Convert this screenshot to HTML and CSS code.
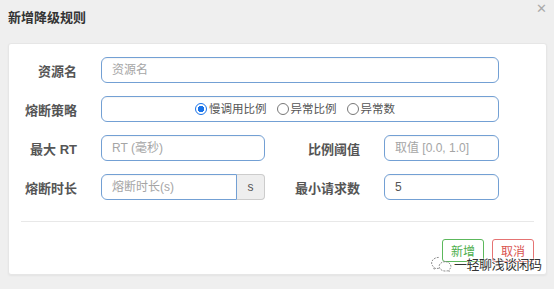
FILE: index.html
```html
<!DOCTYPE html>
<html lang="zh-CN">
<head>
    <meta charset="UTF-8">
    <title>新增降级规则</title>
    <link rel="stylesheet" href="styles.css">
</head>
<body>
    <div class="modal">
        <div class="modal-header">
            <h1>新增降级规则</h1>
            <span class="close">&#x2715;</span>
        </div>

        <div class="modal-body">
            <div class="form-grid">
                <label class="form-label">资源名</label>
                <div class="form-input span-3 placeholder">资源名</div>

                <label class="form-label">熔断策略</label>
                <div class="form-input span-3 radio-group">
                    <span class="radio checked"></span>慢调用比例
                    <span class="radio"></span>异常比例
                    <span class="radio"></span>异常数
                </div>

                <label class="form-label">最大 RT</label>
                <div class="form-input placeholder">RT (毫秒)</div>
                <label class="form-label">比例阈值</label>
                <div class="form-input placeholder">取值 [0.0, 1.0]</div>

                <label class="form-label">熔断时长</label>
                <div class="input-group">
                    <div class="form-input placeholder">熔断时长(s)</div>
                    <span class="addon">s</span>
                </div>
                <label class="form-label">最小请求数</label>
                <div class="form-input value">5</div>
            </div>

            <div class="modal-footer">
                <button class="btn btn-ok">新增</button>
                <button class="btn btn-cancel">取消</button>
            </div>
        </div>

        <!-- 水印 -->
        <div class="watermark">
            <svg width="23" height="16" viewBox="0 0 24 17">
                <path d="M9 1.5c-4.2 0-7.5 2.7-7.5 6 0 1.9 1.1 3.5 2.8 4.6l-.7 2.2 2.6-1.4c.9.3 1.8.4 2.8.4" fill="#fff" stroke="#777" stroke-width="0.9" stroke-dasharray="2 1.2"/>
                <path d="M16 6c-3.6 0-6.5 2.3-6.5 5s2.9 5 6.5 5c.8 0 1.5-.1 2.2-.3l2.1 1.1-.6-1.9c1.4-.9 2.3-2.3 2.3-3.9 0-2.7-2.9-5-6-5z" fill="#fff" stroke="#777" stroke-width="0.9" stroke-dasharray="2 1.2"/>
            </svg>
            <span>一轻聊浅谈闲码</span>
        </div>
    </div>
</body>
</html>
```

FILE: styles.css
```css
* {
    margin: 0;
    padding: 0;
    box-sizing: border-box;
}

body {
    background: #efefef;
    font-family: "Liberation Sans", "Noto Sans CJK SC", sans-serif;
    color: #333;
}

.modal {
    position: relative;
    width: 554px;
    height: 289px;
    padding: 0 7px 0 8px;
}

/* 标题栏 */
.modal-header {
    position: relative;
    height: 43px;
    padding-top: 9px;
}

.modal-header h1 {
    font-size: 13px;
    font-weight: bold;
    color: #333;
    line-height: 17px;
}

.close {
    position: absolute;
    right: 0;
    top: 1px;
    font-size: 13px;
    color: #aaa;
}

/* 表单 */
.modal-body {
    background: #fff;
    border: 1px solid #e6e6e6;
    border-radius: 3px;
    height: 232px;
    padding: 13px 12px 12px 0;
    box-shadow: 0 1px 2px rgba(0,0,0,0.05);
}

.form-grid {
    display: grid;
    grid-template-columns: 68px 164px 71px 115px;
    column-gap: 24px;
    row-gap: 13px;
    align-items: center;
}

.form-label {
    text-align: right;
    font-size: 13px;
    font-weight: bold;
    color: #555;
    white-space: nowrap;
}

.form-input {
    height: 26px;
    border: 1px solid #73a0d4;
    border-radius: 6px;
    padding: 0 10px;
    font-size: 12px;
    line-height: 24px;
    box-shadow: inset 0 1px 1px rgba(0,0,0,0.04);
}

.span-3 {
    grid-column: span 3;
}

.placeholder {
    color: #a5a5a5;
}

.value {
    color: #555;
}

.radio-group {
    display: flex;
    justify-content: center;
    align-items: center;
    color: #555;
    padding-left: 0;
    font-size: 11.5px;
}

.radio {
    width: 12px;
    height: 12px;
    border: 1px solid #777;
    border-radius: 50%;
    margin: 0 2px 0 10px;
}

.radio.checked {
    margin-left: 0;
    border: 1.5px solid #1a73e8;
    background: radial-gradient(circle, #1a73e8 0 3px, #fff 3.5px);
}

.input-group {
    display: flex;
}

.input-group .form-input {
    width: 136px;
    border-radius: 6px 0 0 6px;
}

.addon {
    width: 28px;
    height: 26px;
    background: #eee;
    border: 1px solid #ccc;
    border-left: none;
    border-radius: 0 4px 4px 0;
    text-align: center;
    font-size: 12px;
    line-height: 24px;
    color: #555;
}

.modal-footer {
    margin: 21px 0 0 12px;
    padding-top: 17px;
    border-top: 1px solid #e8e8e8;
    display: flex;
    justify-content: flex-end;
    gap: 8px;
}

.btn {
    width: 42px;
    height: 23px;
    background: #fff;
    border-radius: 3px;
    font-family: inherit;
    font-size: 12px;
}

.btn-ok {
    border: 1px solid #5cb85c;
    color: #4cae4c;
}

.btn-cancel {
    border: 1px solid #e57373;
    color: #d9534f;
}

.watermark {
    position: absolute;
    left: 430px;
    top: 254px;
    display: flex;
    align-items: center;
    gap: 1px;
    font-size: 13px;
    letter-spacing: -0.5px;
    white-space: nowrap;
    color: #333;
    text-shadow: 0 0 2px #fff, 0 0 2px #fff;
}
```
